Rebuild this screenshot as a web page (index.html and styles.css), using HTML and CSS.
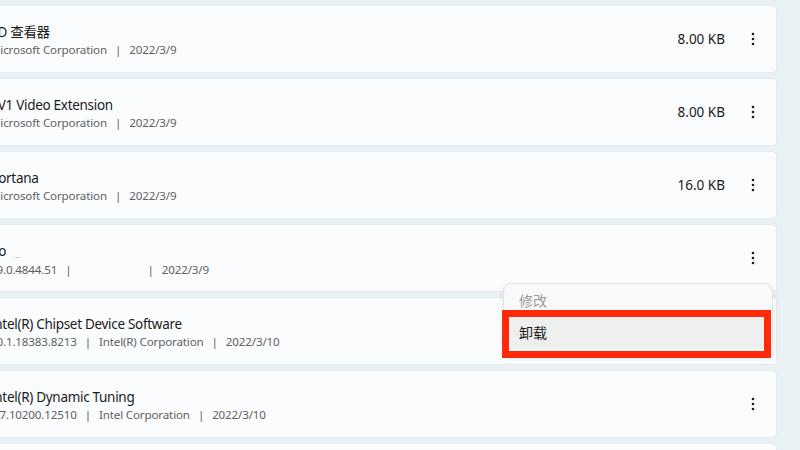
FILE: index.html
```html
<!DOCTYPE html>
<html lang="zh-CN">

<head>
    <meta charset="UTF-8">
    <meta name="viewport" content="width=device-width, initial-scale=1.0">
    <title>应用和功能</title>
    <link rel="stylesheet" href="styles.css">
</head>

<body>
    <div class="page">
        <div class="app_list">
            <div class="app">
                <div class="app_info">
                    <div class="app_name">3D 查看器</div>
                    <div class="app_meta">Microsoft Corporation<span class="sep">|</span>2022/3/9</div>
                </div>
                <div class="app_size">8.00 KB</div>
                <div class="more"><svg width="16" height="16" viewBox="0 0 16 16"><circle cx="8" cy="3" r="1.3"/><circle cx="8" cy="8" r="1.3"/><circle cx="8" cy="13" r="1.3"/></svg></div>
            </div>
            <div class="app">
                <div class="app_info">
                    <div class="app_name">AV1 Video Extension</div>
                    <div class="app_meta">Microsoft Corporation<span class="sep">|</span>2022/3/9</div>
                </div>
                <div class="app_size">8.00 KB</div>
                <div class="more"><svg width="16" height="16" viewBox="0 0 16 16"><circle cx="8" cy="3" r="1.3"/><circle cx="8" cy="8" r="1.3"/><circle cx="8" cy="13" r="1.3"/></svg></div>
            </div>
            <div class="app">
                <div class="app_info">
                    <div class="app_name">Cortana</div>
                    <div class="app_meta">Microsoft Corporation<span class="sep">|</span>2022/3/9</div>
                </div>
                <div class="app_size">16.0 KB</div>
                <div class="more"><svg width="16" height="16" viewBox="0 0 16 16"><circle cx="8" cy="3" r="1.3"/><circle cx="8" cy="8" r="1.3"/><circle cx="8" cy="13" r="1.3"/></svg></div>
            </div>
            <div class="app">
                <div class="app_info">
                    <div class="app_name">Ao<span class="hidden_mark">_</span></div>
                    <div class="app_meta">99.0.4844.51<span class="sep">|</span><span class="blank"></span><span class="sep">|</span>2022/3/9</div>
                </div>
                <div class="app_size"></div>
                <div class="more"><svg width="16" height="16" viewBox="0 0 16 16"><circle cx="8" cy="3" r="1.3"/><circle cx="8" cy="8" r="1.3"/><circle cx="8" cy="13" r="1.3"/></svg></div>
            </div>
            <div class="app">
                <div class="app_info">
                    <div class="app_name">Intel(R) Chipset Device Software</div>
                    <div class="app_meta">10.1.18383.8213<span class="sep">|</span>Intel(R) Corporation<span class="sep">|</span>2022/3/10</div>
                </div>
                <div class="app_size"></div>
                <div class="more"></div>
            </div>
            <div class="app">
                <div class="app_info">
                    <div class="app_name">Intel(R) Dynamic Tuning</div>
                    <div class="app_meta">8.7.10200.12510<span class="sep">|</span>Intel Corporation<span class="sep">|</span>2022/3/10</div>
                </div>
                <div class="app_size"></div>
                <div class="more"><svg width="16" height="16" viewBox="0 0 16 16"><circle cx="8" cy="3" r="1.3"/><circle cx="8" cy="8" r="1.3"/><circle cx="8" cy="13" r="1.3"/></svg></div>
            </div>
            <div class="app"></div>
        </div>

        <!-- 더보기 메뉴 -->
        <div class="menu">
            <div class="menu_item disabled">修改</div>
            <div class="menu_item active">卸载</div>
        </div>
        <div class="highlight"></div>
    </div>
</body>

</html>
```

FILE: styles.css
```css
body {
    margin: 0;
    background-color: #eaf1f4;
    font-family: "Noto Sans", "Noto Sans CJK SC", sans-serif;
    color: #1b1b1b;
}

.page {
    position: relative;
    width: 800px;
    height: 450px;
    overflow: hidden;
}

.app_list {
    display: flex;
    flex-direction: column;
    gap: 5px;
    width: 837px;
    margin-left: -60px;
    padding-top: 5px;
}

.app {
    display: flex;
    align-items: center;
    flex-shrink: 0;
    box-sizing: border-box;
    height: 68px;
    padding: 0 7px 0 49px;
    background-color: #fafcfd;
    border: 1px solid #e4ebee;
    border-radius: 4px;
}

.app_info {
    flex: 1;
    padding-top: 3px;
}

.app_name {
    font-size: 13.5px;
    line-height: 18px;
    letter-spacing: -0.3px;
}

.hidden_mark {
    margin-left: 9px;
    color: #b9bec1;
    font-size: 10px;
}

.app_meta {
    margin-top: 1px;
    font-size: 11.6px;
    line-height: 16px;
    color: #5e6163;
    letter-spacing: -0.15px;
}

.sep {
    margin: 0 8px;
}

.blank {
    display: inline-block;
    width: 60px;
}

.app_size {
    font-size: 13.5px;
    margin-right: 12px;
}

.more {
    width: 32px;
    height: 32px;
    display: flex;
    align-items: center;
    justify-content: center;
}

.more svg {
    fill: #1b1b1b;
}

.menu {
    position: absolute;
    left: 503px;
    top: 283px;
    width: 270px;
    padding: 1px 0 4px;
    box-sizing: border-box;
    background-color: #f9f9f9;
    border: 1px solid #e3e3e3;
    border-radius: 8px;
    box-shadow: 0 4px 10px rgba(0, 0, 0, 0.08);
}

.menu_item {
    height: 32px;
    line-height: 32px;
    margin: 0 4px;
    padding-left: 11px;
    font-size: 14px;
    border-radius: 4px;
}

.disabled {
    color: #9b9b9b;
}

.active {
    background-color: #efefef;
}

.highlight {
    position: absolute;
    left: 502px;
    top: 310px;
    width: 269px;
    height: 48px;
    box-sizing: border-box;
    border: 7px solid #ff2a0a;
}
```
